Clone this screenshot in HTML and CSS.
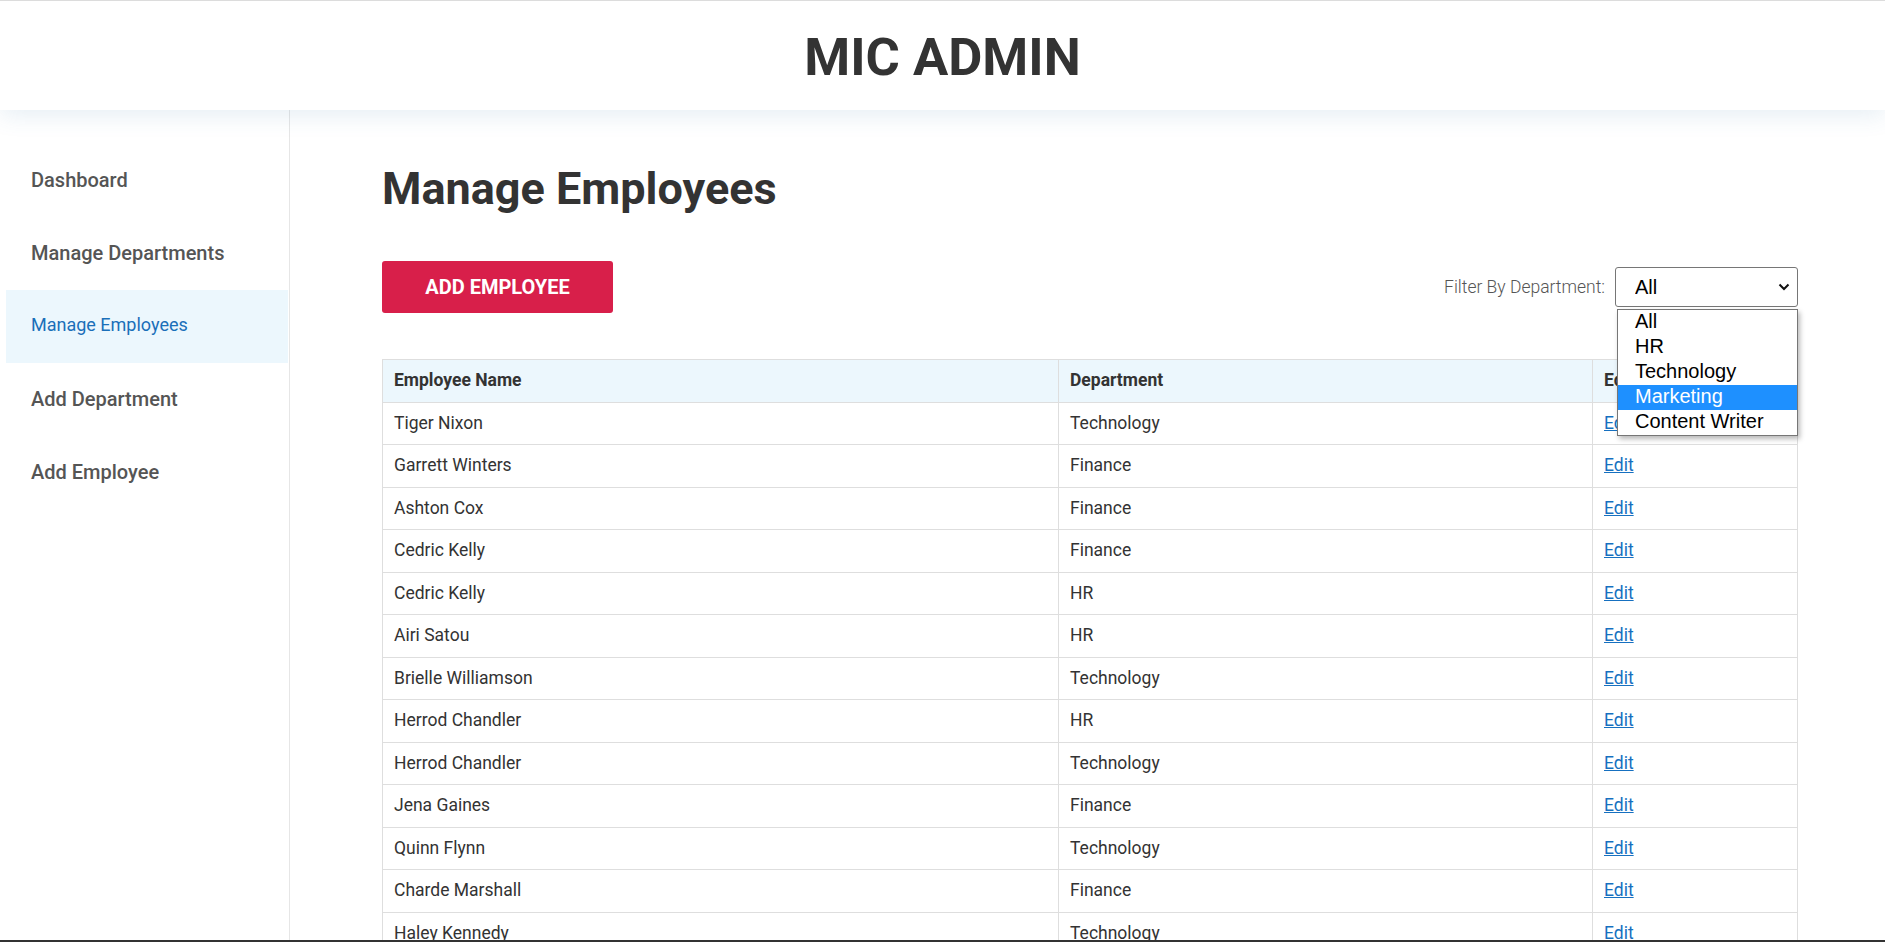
FILE: index.html
```html
<!DOCTYPE html>
<html lang="en">
<head>
<meta charset="utf-8">
<title>MIC ADMIN - Manage Employees</title>
<link rel="stylesheet" href="styles.css">
</head>
<body>
<header class="topbar">
  <h1 class="brand">MIC ADMIN</h1>
</header>
<div class="layout">
  <nav class="sidebar">
    <a class="nav-item" href="#">Dashboard</a>
    <a class="nav-item" href="#">Manage Departments</a>
    <a class="nav-item active" href="#">Manage Employees</a>
    <a class="nav-item" href="#">Add Department</a>
    <a class="nav-item" href="#">Add Employee</a>
  </nav>
  <main class="main">
    <h2 class="page-title">Manage Employees</h2>
    <div class="toolbar">
      <button class="btn-add" type="button">ADD EMPLOYEE</button>
      <div class="filter">
        <label class="filter-label" for="dept">Filter By Department:</label>
        <div class="select-wrap">
          <select id="dept" class="select">
            <option>All</option>
            <option>HR</option>
            <option>Technology</option>
            <option>Marketing</option>
            <option>Content Writer</option>
          </select>
          <svg class="chev" width="12" height="8" viewBox="0 0 12 8"><path d="M1.5 1.5 L6 6 L10.5 1.5" fill="none" stroke="#111" stroke-width="2"/></svg>
          <ul class="dropdown">
            <li>All</li>
            <li>HR</li>
            <li>Technology</li>
            <li class="hl">Marketing</li>
            <li>Content Writer</li>
          </ul>
        </div>
      </div>
    </div>
    <table class="grid">
      <colgroup>
        <col class="c1"><col class="c2"><col class="c3">
      </colgroup>
      <thead>
        <tr><th>Employee Name</th><th>Department</th><th>Edit</th></tr>
      </thead>
      <tbody>
        <tr><td>Tiger Nixon</td><td>Technology</td><td><a href="#">Edit</a></td></tr>
        <tr><td>Garrett Winters</td><td>Finance</td><td><a href="#">Edit</a></td></tr>
        <tr><td>Ashton Cox</td><td>Finance</td><td><a href="#">Edit</a></td></tr>
        <tr><td>Cedric Kelly</td><td>Finance</td><td><a href="#">Edit</a></td></tr>
        <tr><td>Cedric Kelly</td><td>HR</td><td><a href="#">Edit</a></td></tr>
        <tr><td>Airi Satou</td><td>HR</td><td><a href="#">Edit</a></td></tr>
        <tr><td>Brielle Williamson</td><td>Technology</td><td><a href="#">Edit</a></td></tr>
        <tr><td>Herrod Chandler</td><td>HR</td><td><a href="#">Edit</a></td></tr>
        <tr><td>Herrod Chandler</td><td>Technology</td><td><a href="#">Edit</a></td></tr>
        <tr><td>Jena Gaines</td><td>Finance</td><td><a href="#">Edit</a></td></tr>
        <tr><td>Quinn Flynn</td><td>Technology</td><td><a href="#">Edit</a></td></tr>
        <tr><td>Charde Marshall</td><td>Finance</td><td><a href="#">Edit</a></td></tr>
        <tr><td>Haley Kennedy</td><td>Technology</td><td><a href="#">Edit</a></td></tr>
      </tbody>
    </table>
  </main>
</div>
<div class="screen-edge"></div>
</body>
</html>
```

FILE: styles.css
```css
* { box-sizing: border-box; }
html, body { margin: 0; padding: 0; }
body {
  font-family: Roboto, "Liberation Sans", Arial, sans-serif;
  color: #333;
  background: #fff;
}
.topbar {
  position: relative;
  z-index: 2;
  height: 110px;
  border-top: 1px solid #dcdcdc;
  background: #fff;
  display: flex;
  align-items: center;
  justify-content: center;
  box-shadow: 0 6px 22px rgba(60, 120, 170, 0.12);
}
.brand {
  margin: 0;
  padding-top: 2px;
  font-size: 52.5px;
  font-weight: 700;
  color: #333;
}
.layout {
  display: flex;
  min-height: calc(100vh - 110px);
}
.sidebar {
  width: 290px;
  flex: 0 0 290px;
  border-right: 1px solid #e6e6e6;
  padding: 34px 1px 0 6px;
  display: flex;
  flex-direction: column;
}
.nav-item {
  height: 73px;
  display: flex;
  align-items: center;
  padding: 0 0 2px 25px;
  font-size: 20px;
  font-weight: 500;
  color: #555;
  text-decoration: none;
}
.nav-item.active {
  background: #ecf7fd;
  color: #1a6fb9;
  font-size: 18px;
  font-weight: 400;
  padding-bottom: 4px;
}
.main {
  flex: 1;
  padding: 52px 87px 0 92px;
}
.page-title {
  margin: 0;
  font-size: 45px;
  font-weight: 700;
  color: #333;
  line-height: normal;
}
.toolbar {
  margin-top: 46px;
  display: flex;
  justify-content: space-between;
  align-items: center;
}
.btn-add {
  width: 231px;
  height: 52px;
  border: 0;
  border-radius: 3px;
  background: #d81f4a;
  color: #fff;
  font-family: Roboto, "Liberation Sans", Arial, sans-serif;
  font-size: 20px;
  font-weight: 700;
  cursor: pointer;
}
.filter {
  display: flex;
  align-items: center;
  gap: 10px;
}
.filter-label {
  font-size: 17.5px;
  font-weight: 300;
  color: #555;
}
.select-wrap {
  position: relative;
}
.select {
  appearance: none;
  -webkit-appearance: none;
  width: 183px;
  height: 40px;
  border: 1px solid #767676;
  border-radius: 3px;
  background: #fff;
  padding: 0 0 0 19px;
  font-family: Arial, "Liberation Sans", sans-serif;
  font-size: 20px;
  color: #000;
  display: block;
}
.chev {
  position: absolute;
  right: 8px;
  top: 16px;
  pointer-events: none;
}
.dropdown {
  position: absolute;
  z-index: 5;
  top: 42px;
  left: 2px;
  width: 181px;
  margin: 0;
  padding: 0;
  list-style: none;
  background: #fff;
  border: 1px solid #767676;
  box-shadow: 2px 3px 5px rgba(0, 0, 0, 0.28);
  font-family: Arial, "Liberation Sans", sans-serif;
  font-size: 20px;
  color: #000;
}
.dropdown li {
  height: 25px;
  line-height: 23px;
  padding-left: 17px;
}
.dropdown li.hl {
  background: #1e90ff;
  color: #fff;
}
.grid {
  margin-top: 46px;
  width: 100%;
  border-collapse: collapse;
  font-size: 17.5px;
}
.c1 { width: 676px; }
.c2 { width: 534px; }
.grid th, .grid td {
  border: 1px solid #dedede;
  padding: 12px 11px;
  text-align: left;
  line-height: 17.5px;
}
.grid th {
  background: #ecf7fd;
  font-weight: 700;
  color: #333;
}
.grid td { color: #333; }
.grid a {
  color: #1670c0;
  text-decoration: underline;
}
.screen-edge {
  position: fixed;
  left: 0;
  right: 0;
  bottom: 0;
  height: 2px;
  background: #333;
  z-index: 10;
}
```
